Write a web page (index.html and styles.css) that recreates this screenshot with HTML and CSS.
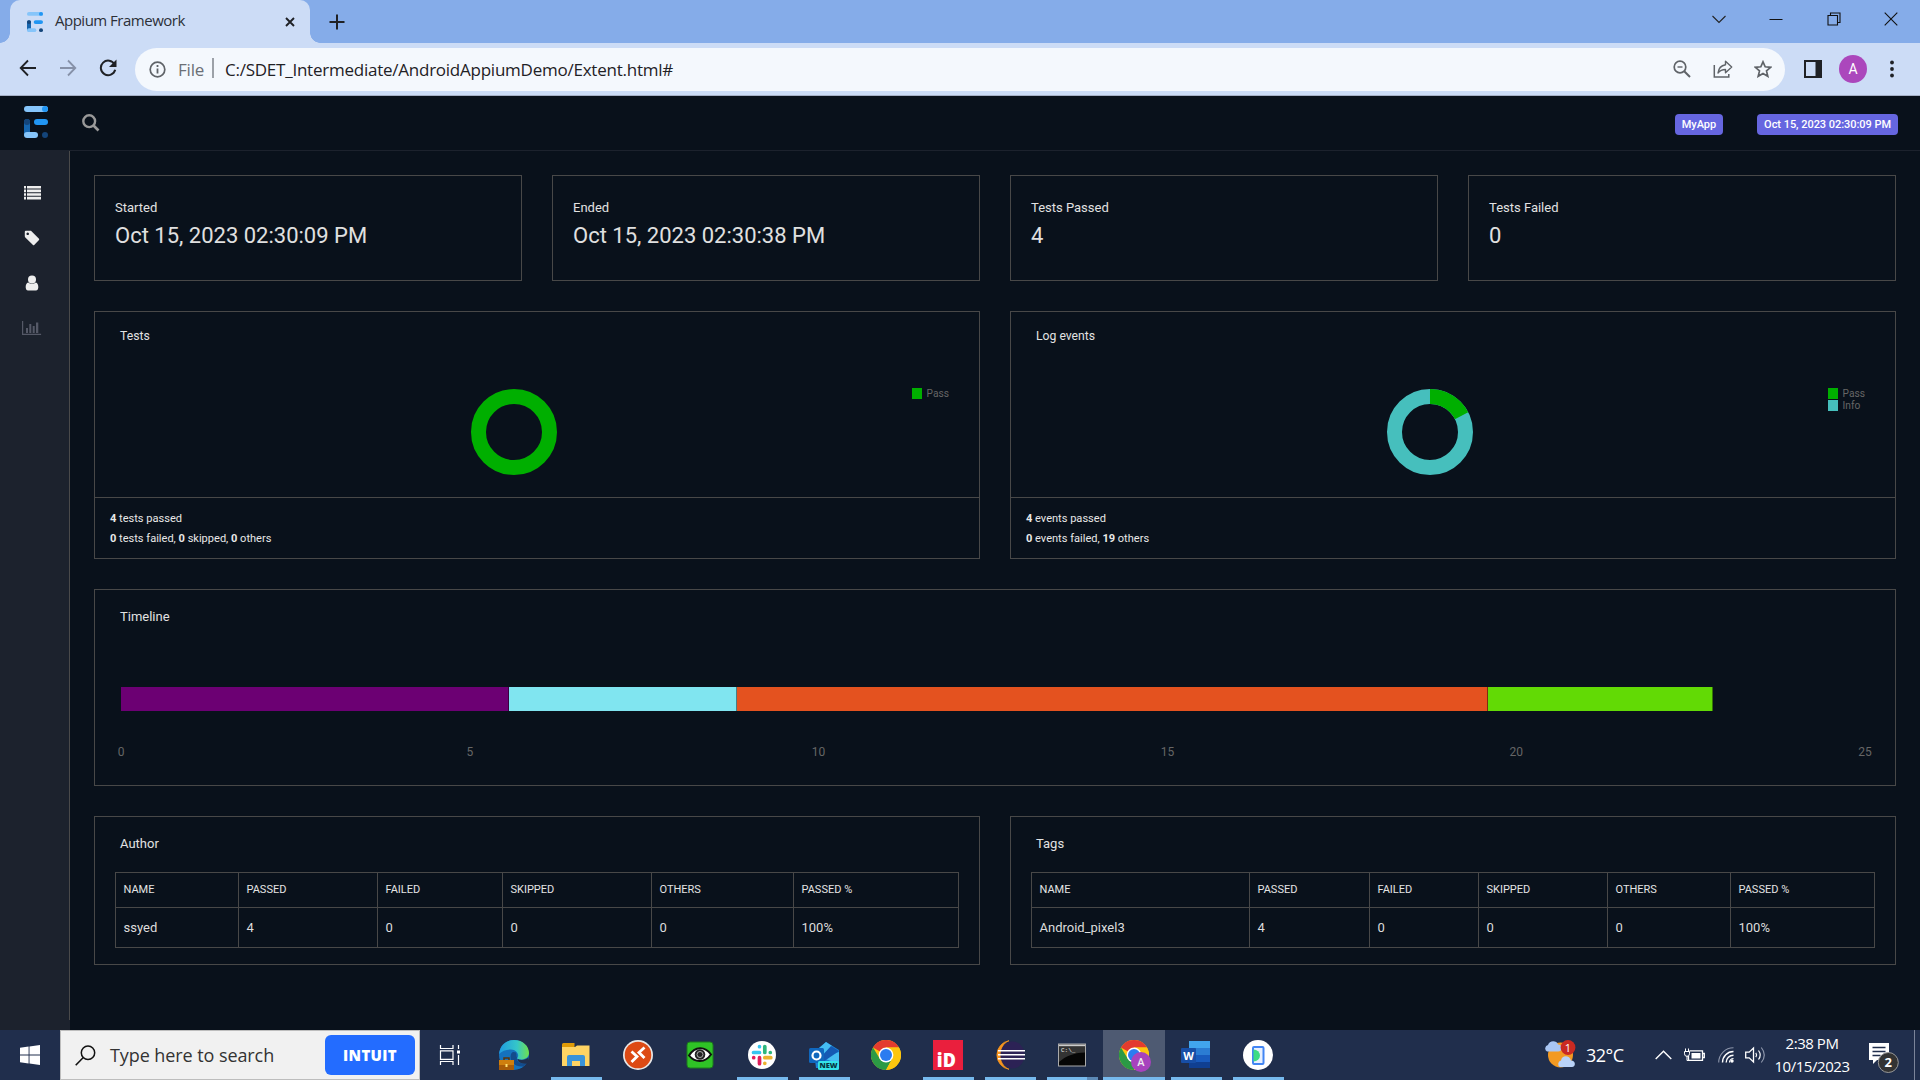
FILE: index.html
```html
<!DOCTYPE html>
<html lang="en">
<head>
<meta charset="utf-8">
<title>Appium Framework</title>
<link rel="stylesheet" href="styles.css">
</head>
<body>
<svg class="defs" width="0" height="0">
  <defs>
    <symbol id="logo" viewBox="0 0 24 32" preserveAspectRatio="none">
      <rect width="24" height="6" rx="3" fill="#86c5fa"/><circle cx="21" cy="3" r="3" fill="#2196f3"/>
      <rect x="10" y="13" width="14" height="6" rx="3" fill="#2196f3"/>
      <rect y="13" width="6" height="18" rx="3" fill="#1565ae"/><circle cx="3" cy="16" r="3" fill="#14457a"/>
      <rect y="26" width="14" height="6" rx="3" fill="#86c5fa"/><circle cx="21" cy="29" r="3" fill="#14457a"/>
    </symbol>
    <symbol id="chrome" viewBox="0 0 30 30">
      <circle cx="15" cy="15" r="15" fill="#fdc60f"/>
      <path d="M15 15 2 7.5A15 15 0 0 1 28 7.5H15z" fill="#e33b2e"/>
      <path d="M2 7.5A15 15 0 0 0 15 30L21.2 18.7 8.8 18.7z" fill="#2b9a45"/>
      <path d="M28 7.5H15L21.2 18.7 15 30A15 15 0 0 0 28 7.5z" fill="#fdc60f"/>
      <circle cx="15" cy="15" r="7.4" fill="#fff"/><circle cx="15" cy="15" r="6" fill="#2b7cf0"/>
    </symbol>
  </defs>
</svg>

<div class="tabstrip">
  <div class="tab">
    <svg class="favicon" width="16" height="20"><use href="#logo"/></svg>
    <span class="tab-title">Appium Framework</span>
    <svg class="tab-close" width="10" height="10" viewBox="0 0 10 10"><path d="M1 1l8 8M9 1l-8 8" stroke="#1f2125" stroke-width="1.9"/></svg>
  </div>
  <svg class="newtab" width="16" height="16" viewBox="0 0 16 16"><path d="M8 .5v15M.5 8h15" stroke="#1f2125" stroke-width="2"/></svg>
  <div class="winbtns">
    <svg width="14" height="14" viewBox="0 0 14 14"><path d="M.5 4 7 10.500 13.500 4" fill="none" stroke="#222" stroke-width="1.1"/></svg>
    <svg width="14" height="14" viewBox="0 0 14 14"><path d="M.5 7.500h13" stroke="#111"/></svg>
    <svg width="14" height="14" viewBox="0 0 14 14"><path d="M1 3.500h9.500v9.500H1zM3.500 3.500V1h9.500v9.500h-2.500" fill="none" stroke="#111" stroke-width="1.1"/></svg>
    <svg width="14" height="14" viewBox="0 0 14 14"><path d="M.7.700l12.600 12.600M13.300.700.700 13.300" stroke="#111" stroke-width="1.100"/></svg>
  </div>
</div>

<div class="toolbar">
  <svg width="18" height="18" viewBox="0 0 18 18" class="nav"><path d="M17 9H2M9 1.500 1.700 9 9 16.500" fill="none" stroke="#1f2125" stroke-width="1.800"/></svg>
  <svg width="18" height="18" viewBox="0 0 18 18" class="nav"><path d="M1 9h15M9 1.500 16.300 9 9 16.500" fill="none" stroke="#8691a8" stroke-width="1.800"/></svg>
  <svg width="18" height="18" viewBox="0 0 18 18" class="nav"><path d="M15.600 5.500A7.300 7.300 0 1 0 16.200 10.800" fill="none" stroke="#1f2125" stroke-width="2"/><path d="M17.500.500v7.500H10z" fill="#1f2125"/></svg>
  <div class="omnibox">
    <svg width="17" height="17" viewBox="0 0 17 17"><circle cx="8.500" cy="8.500" r="7.300" fill="none" stroke="#5f6368" stroke-width="1.700"/><path d="M8.500 7.500v5M8.500 4v2" stroke="#5f6368" stroke-width="1.800"/></svg>
    <span class="scheme">File</span>
    <span class="sep"></span>
    <span class="url">C:/SDET_Intermediate/AndroidAppiumDemo/Extent.html#</span>
    <div class="omni-actions">
      <svg width="18" height="18" viewBox="0 0 18 18"><circle cx="7" cy="7" r="5.800" fill="none" stroke="#5f6368" stroke-width="1.700"/><path d="M11.200 11.200l5.800 5.800" stroke="#5f6368" stroke-width="2"/><path d="M4.500 7h5" stroke="#5f6368" stroke-width="1.400"/></svg>
      <svg width="20" height="18" viewBox="0 0 20 18"><path d="M1.300 5v12h14.500v-3" fill="none" stroke="#5f6368" stroke-width="1.500"/><path d="M12.500 1.300 18.700 7l-6.200 5.700V9.500C9 9.500 7 10.500 5 13c.500-4.500 3-7.500 7.500-8.300z" fill="none" stroke="#5f6368" stroke-width="1.400" stroke-linejoin="round"/></svg>
      <svg width="18" height="18" viewBox="0 0 18 18"><path d="M9 1.800 11.200 6.800 16.700 7.300 12.500 10.900 13.800 16.300 9 13.400 4.200 16.300 5.500 10.900 1.300 7.300 6.800 6.800z" fill="none" stroke="#5f6368" stroke-width="1.700"/></svg>
    </div>
  </div>
  <svg class="panel-ico" width="18" height="18" viewBox="0 0 18 18"><path d="M0 0h18v18H0zM2 2v14h9.500V2z" fill="#1f2125" fill-rule="evenodd"/></svg>
  <div class="avatar">A</div>
  <svg class="kebab" width="4" height="18" viewBox="0 0 4 18"><g fill="#1f2125"><circle cx="2" cy="2.500" r="1.900"/><circle cx="2" cy="9" r="1.900"/><circle cx="2" cy="15.500" r="1.900"/></g></svg>
</div>

<div class="app">
  <header class="header">
    <svg class="brand" width="24" height="32"><use href="#logo"/></svg>
    <svg width="18" height="18" viewBox="0 0 18 18" class="search"><circle cx="7.200" cy="7.200" r="5.900" fill="none" stroke="#999" stroke-width="2.400"/><path d="M11.500 11.500l5 5" stroke="#999" stroke-width="2.600"/></svg>
    <span class="badge">MyApp</span>
    <span class="badge">Oct 15, 2023 02:30:09 PM</span>
  </header>
  <div class="body">
    <nav class="side">
      <div class="rail">
        <svg width="18" height="14" viewBox="0 0 18 14"><path d="M1 0h2v2.600H1zM1 3.600h2v2.600H1zM1 7.200h2v2.600H1zM1 10.800h2v2.600H1zM4 0h14v2.600H4zM4 3.600h14v2.600H4zM4 7.200h14v2.600H4zM4 10.800h14v2.600H4z" fill="#eee"/></svg>
        <svg width="16" height="16" viewBox="0 0 16 16"><path d="M.800 1.700A1 1 0 0 1 1.700.800H7L15 8.800a1 1 0 0 1 0 1.200L10.200 14.900a1 1 0 0 1-1.200 0L1.300 7.500.800 6.500zM3.700 2.500a1.300 1.300 0 1 0 .01 0z" fill="#eee" fill-rule="evenodd"/></svg>
        <svg width="14" height="16" viewBox="0 0 14 16"><circle cx="7" cy="4.500" r="4" fill="#eee"/><path d="M3.200 7.500C1.500 8 .500 9.800.700 12.500 1 14.500 1.500 15.500 3 15.500h8c1.500 0 2-1 2.300-3 .200-2.700-.800-4.500-2.500-5-2 1.800-5.600 1.800-7.600 0z" fill="#eee"/></svg>
        <svg width="20" height="14" viewBox="0 0 20 14"><path d="M.600 0v13.300h18.500" fill="none" stroke="#555967" stroke-width="1.200"/><path d="M4 7h2v5H4zM7.300 3h2v9h-2zM10.700 5h2v7h-2zM14 1.500h2.300V12H14z" fill="#555967"/></svg>
      </div>
    </nav>
    <main class="main">
      <div class="row four">
        <section class="card stat"><div class="lbl">Started</div><div class="val">Oct 15, 2023 02:30:09 PM</div></section>
        <section class="card stat"><div class="lbl">Ended</div><div class="val">Oct 15, 2023 02:30:38 PM</div></section>
        <section class="card stat"><div class="lbl">Tests Passed</div><div class="val">4</div></section>
        <section class="card stat"><div class="lbl">Tests Failed</div><div class="val">0</div></section>
      </div>
      <div class="row two">
        <section class="card chart">
          <div class="plot">
            <h6>Tests</h6>
            <svg class="ring" width="88" height="88" viewBox="-44 -44 88 88"><circle r="35.500" fill="none" stroke="#00af00" stroke-width="15"/></svg>
            <div class="legend"><div><i class="pass"></i>Pass</div></div>
          </div>
          <div class="foot"><div><b>4</b> tests passed</div><div><b>0</b> tests failed, <b>0</b> skipped, <b>0</b> others</div></div>
        </section>
        <section class="card chart">
          <div class="plot">
            <h6>Log events</h6>
            <svg class="ring" width="88" height="88" viewBox="-44 -44 88 88"><circle r="35.500" fill="none" stroke="#46bfbd" stroke-width="15"/><circle r="35.500" fill="none" stroke="#00af00" stroke-width="15" pathLength="23" stroke-dasharray="4 19" transform="rotate(-90)"/></svg>
            <div class="legend"><div><i class="pass"></i>Pass</div><div><i class="info"></i>Info</div></div>
          </div>
          <div class="foot"><div><b>4</b> events passed</div><div><b>0</b> events failed, <b>19</b> others</div></div>
        </section>
      </div>
      <section class="card timeline">
        <h6>Timeline</h6>
        <div class="bars">
          <span class="b1" style="width:388px"></span><span class="b2" style="width:228px"></span><span class="b3" style="width:751px"></span><span class="b4" style="width:225px"></span>
        </div>
        <div class="axis"><span>0</span><span>5</span><span>10</span><span>15</span><span>20</span><span>25</span></div>
      </section>
      <div class="row two">
        <section class="card tbl">
          <h6>Author</h6>
          <div class="grid author">
            <span>NAME</span><span>PASSED</span><span>FAILED</span><span>SKIPPED</span><span>OTHERS</span><span>PASSED %</span>
            <span>ssyed</span><span>4</span><span>0</span><span>0</span><span>0</span><span>100%</span>
          </div>
        </section>
        <section class="card tbl">
          <h6>Tags</h6>
          <div class="grid tags">
            <span>NAME</span><span>PASSED</span><span>FAILED</span><span>SKIPPED</span><span>OTHERS</span><span>PASSED %</span>
            <span>Android_pixel3</span><span>4</span><span>0</span><span>0</span><span>0</span><span>100%</span>
          </div>
        </section>
      </div>
    </main>
  </div>
</div>

<div class="taskbar">
  <div class="start"><svg width="20" height="20" viewBox="0 0 20 20"><path d="M0 2.800 8.600 1.600V9.600H0zM9.500 1.500 20 0V9.600H9.500zM0 10.500H8.600V18.500L0 17.300zM9.500 10.500H20V20L9.500 18.600z" fill="#fff"/></svg></div>
  <div class="find">
    <svg width="21" height="21" viewBox="0 0 21 21"><circle cx="13" cy="7.800" r="6.700" fill="none" stroke="#111" stroke-width="1.500"/><path d="M8.300 12.500.700 20.200" stroke="#111" stroke-width="1.600"/></svg>
    <span class="find-text">Type here to search</span>
    <span class="intuit">INTUIT</span>
  </div>
  <div class="tview"><svg width="22" height="20" viewBox="0 0 22 20"><path d="M1.500 0v3.500h12.500V0M1.500 20v-3.500h12.500V20M1.500 5.800h12.500v8.500H1.500zM19.500 0v4M19.500 10v10" fill="none" stroke="#fff" stroke-width="1.200"/><path d="M18 5.500h3v3h-3z" fill="#fff"/></svg></div>
  <div class="apps">
    <div class="ap"><svg width="30" height="30" viewBox="0 0 30 30"><defs><linearGradient id="eg" x1="0" x2="1"><stop offset="0" stop-color="#1f9be0"/><stop offset=".6" stop-color="#35c6c9"/><stop offset="1" stop-color="#6fe04d"/></linearGradient></defs><circle cx="15" cy="15" r="15" fill="#1572bd"/><path d="M0 14C1 5 7 0 15 0c9 0 15 6 15 13 0 6-8 8-12 5.500 3-3 0-9-6-9C7 9.500 3 11 0 14z" fill="url(#eg)"/><path d="M12 14c-2 7 3 13 12 12.500l4-3c-8 1-11-3-10-6-1-1 0-3-1-5-2-1-4-1-5 1.500z" fill="#134b8c"/><path d="M18.500 18.700c3 2 8 1.500 11-1.500v4l-2 2.500c-6 0-9-2-9-5z" fill="#202e4c"/><rect y="20" width="15" height="10" fill="#cf7f0e"/><rect y="25" width="15" height="5" fill="#a95c08"/><path d="M5 20v-2h5v2" fill="none" stroke="#5c3408" stroke-width="1.500"/><rect x="6.500" y="24" width="2" height="3" fill="#ffe070"/></svg></div>
    <div class="ap on"><svg width="30" height="30" viewBox="0 0 30 30"><path d="M1 4.500a1.500 1.500 0 0 1 1.500-1.500h11v5H1z" fill="#e09b07"/><path d="M1 7h13l2-1.500h12.500V26H1z" fill="#ffd463"/><path d="M6 26V17a2 2 0 0 1 2-2h14a2 2 0 0 1 2 2v9h-5v-5h-8v5z" fill="#3a93d8"/></svg></div>
    <div class="ap"><svg width="30" height="30" viewBox="0 0 30 30"><circle cx="15" cy="15" r="15" fill="#e8e8e8"/><circle cx="15" cy="15" r="13.300" fill="#dd4a14"/><path d="M8.500 11.500 14 16.500 8.500 22M21.500 7.500 16 12.500 21.500 18" fill="none" stroke="#fff" stroke-width="2.800"/></svg></div>
    <div class="ap"><svg width="30" height="30" viewBox="0 0 30 30"><rect x="2" y="2" width="26" height="26" rx="3" fill="#2fc326" stroke="#1c7c1c"/><path d="M4 15.500C10 6 20 6 26 14.500 20 23 10 23 4 15.500z" fill="#fff" stroke="#111" stroke-width="2"/><circle cx="15" cy="14.500" r="5.300" fill="#222"/><circle cx="15" cy="14.500" r="3" fill="none" stroke="#aaa"/></svg></div>
    <div class="ap on"><svg width="30" height="30" viewBox="0 0 30 30"><circle cx="15" cy="15" r="14" fill="#fff"/><g stroke-width="3.700" stroke-linecap="round"><path d="M12.500 6.700v.01M6.500 12.500h6" stroke="#36c5f0"/><path d="M17.800 6.500v6M23.300 12.500v.01" stroke="#2eb67d"/><path d="M17.800 17.700h6M17.800 23.300v.01" stroke="#ecb22e"/><path d="M12.500 17.700v6M6.700 17.700v.01" stroke="#e01e5a"/></g></svg></div>
    <div class="ap on"><svg width="30" height="30" viewBox="0 0 30 30"><path d="M5 12 17 2l13 8v16a2 2 0 0 1-2 2H7z" fill="#1a83d8"/><path d="M8 10 17 2l6 4L12 16zM30 12v12L14 18z" fill="#45bdf2"/><path d="M22 6l8 5-16 11V15z" fill="#1559b3"/><rect y="8" width="15" height="15" rx="1.500" fill="#1067bd"/><circle cx="7.500" cy="15.500" r="4" fill="none" stroke="#fff" stroke-width="2.200"/><rect x="9" y="21" width="21" height="9" rx="1.500" fill="#35e3e8"/><text x="19.500" y="28.300" text-anchor="middle" font-family="Open Sans, sans-serif" font-weight="800" font-size="7.500" fill="#073642">NEW</text></svg></div>
    <div class="ap"><svg width="30" height="30"><use href="#chrome"/></svg></div>
    <div class="ap on"><svg class="id-ico" width="30" height="30" viewBox="0 0 30 30"><rect width="30" height="30" fill="#ea1f3d"/><text x="13.300" y="26.500" text-anchor="middle" textLength="19" lengthAdjust="spacingAndGlyphs" font-family="Open Sans, sans-serif" font-weight="800" font-size="19" fill="#fff">iD</text></svg></div>
    <div class="ap on"><svg width="30" height="30" viewBox="0 0 30 30"><path d="M14 .700A14.500 14.500 0 0 0 14 29.300C2.500 25 2.500 5 14 .700z" fill="#f7941e" stroke="#f7941e" stroke-width=".8"/><ellipse cx="17.500" cy="15" rx="12" ry="13.500" fill="#2c2255"/><path d="M3 10.800h27M3 14.800h27M3 18.800h27" stroke="#fff" stroke-width="1.500"/></svg></div>
    <div class="ap on split"><svg width="30" height="30" viewBox="0 0 30 30"><rect x="1.500" y="4" width="27" height="22" fill="#060606" stroke="#aaa"/><path d="M2 4.500h26v2H2z" fill="#ccc"/><path d="M2 6.500h26v6C16 13 9 16 2 22z" fill="#333"/><text x="4" y="12" font-family="Liberation Mono, monospace" font-size="6" fill="#eee">C:\_</text></svg></div>
    <div class="ap on active"><svg width="34" height="34" viewBox="0 0 34 34"><use href="#chrome" x="2" y="2" width="30" height="30"/><circle cx="24" cy="24" r="10" fill="#a743bd"/><text x="24" y="28" text-anchor="middle" font-family="Roboto, sans-serif" font-weight="500" font-size="11" fill="#eee">A</text></svg></div>
    <div class="ap on"><svg width="30" height="30" viewBox="0 0 30 30"><path d="M8 1h21v7H8z" fill="#41a5ee"/><path d="M8 8h21v7H8z" fill="#2b7cd3"/><path d="M8 15h21v7H8z" fill="#185abd"/><path d="M8 22h21v6H8z" fill="#103f91"/><rect x="0" y="8" width="15" height="15" rx="1" fill="#174ea6"/><text x="7.500" y="19.500" text-anchor="middle" font-family="Open Sans, sans-serif" font-weight="700" font-size="11" fill="#fff">W</text></svg></div>
    <div class="ap on"><svg width="30" height="30" viewBox="0 0 30 30"><circle cx="15" cy="15" r="15" fill="#fff"/><rect x="10" y="7" width="10.500" height="17" rx="1" fill="#e8f0fe" stroke="#4285f4" stroke-width="2"/><path d="M10.500 9.500a6.500 6 0 0 1 0 12z" fill="#3ddc84"/></svg></div>
  </div>
  <div class="tray">
    <svg width="31" height="30" viewBox="0 0 31 30"><circle cx="15.500" cy="15" r="12.500" fill="#f39a22"/><path d="M2 11.500a3.500 3.500 0 0 1 1-6.500C4 0 12 0 13 4.500c5 0 5 7 0 7z" fill="#a9c6f3"/><path d="M15 27a3.500 3.500 0 0 1 1-6.500c1-6 9-5 10 0 5 0 5 6.500 1 6.500z" fill="#b9d2f7"/><circle cx="23" cy="7.500" r="7.400" fill="#c92a22"/><text x="23" y="11.500" text-anchor="middle" font-family="Open Sans, sans-serif" font-size="11" fill="#fff">1</text></svg>
    <span class="temp">32°C</span>
    <svg class="chev" width="17" height="10" viewBox="0 0 17 10"><path d="M.700 9 8.500 1.200 16.300 9" fill="none" stroke="#fff" stroke-width="1.400"/></svg>
    <svg class="bat" width="21" height="14" viewBox="0 0 21 14"><path d="M5.500 2.800h13v9.500H4.500V8M19 5.500h1.300v4H19" fill="none" stroke="#fff" stroke-width="1.300"/><path d="M7.500 5h9v5.500h-9z" fill="#fff"/><path d="M.500 3.500h5v2.300a2.500 2.500 0 0 1-5 0zM1.500.500v3M4.500.500v3M3 8v4.500h2" fill="none" stroke="#fff"/></svg>
    <svg class="wifi" width="16" height="16" viewBox="0 0 16 16"><g fill="none"><path d="M.700 15.500A14.800 14.800 0 0 1 15.500 .700" stroke="#8c95aa" stroke-width="1.100"/><path d="M4.500 15.500A11 11 0 0 1 15.500 4.500M8.200 15.500a7.300 7.300 0 0 1 7.300-7.300" stroke="#fff" stroke-width="1.400"/></g><path d="M11.500 15.500a4 4 0 0 1 4-4" fill="none" stroke="#fff" stroke-width="1.200"/><circle cx="14" cy="14" r="1.700" fill="#fff"/></svg>
    <svg class="vol" width="21" height="18" viewBox="0 0 21 18"><path d="M.700 6.200h3.500L8.500 2v14L4.200 11.800H.700z" fill="none" stroke="#fff" stroke-width="1.300"/><path d="M10.800 6.800q1.600 2.200 0 4.400M13.500 4.500q3.400 4.500 0 9" fill="none" stroke="#fff" stroke-width="1.200"/><path d="M16.300 1.500q6 7.500 0 15" fill="none" stroke="#8c95aa" stroke-width="1.200"/></svg>
    <div class="clock"><span>2:38 PM</span><span>10/15/2023</span></div>
    <svg class="note" width="32" height="32" viewBox="0 0 32 32"><path d="M1 1h20v17H9l-4 4v-4H1z" fill="#fff"/><path d="M4.500 5.500h13M4.500 9.500h13M4.500 13.500h8" stroke="#202e4c" stroke-width="1.300"/><circle cx="20.300" cy="20.500" r="10" fill="#333" stroke="#999"/><text x="20.300" y="25" text-anchor="middle" font-family="Open Sans, sans-serif" font-weight="700" font-size="13" fill="#fff">2</text></svg>
  </div>
</div>
</body>
</html>
```
FILE: styles.css
```css
* { box-sizing: border-box; }
body {
  margin: 0; width: 1920px; height: 1080px; overflow: hidden;
  display: flex; flex-direction: column;
  background: #09111b; color: #ddd;
  font-family: Roboto, sans-serif; font-size: 13px;
}
svg { display: block; flex: none; }
.defs { position: absolute; }

/* browser frame */
.tabstrip { height: 43px; flex: none; display: flex; align-items: center; background: #85ace9; padding-left: 10px; font-family: "Open Sans", sans-serif; }
.tab { width: 300px; height: 43px; display: flex; align-items: center; background: #ccdcf6; border-radius: 10px 10px 0 0; padding: 0 15px 0 17px; position: relative; }
.tab::before, .tab::after { content: ""; position: absolute; bottom: 0; width: 10px; height: 10px; }
.tab::before { left: -10px; background: radial-gradient(circle at 0 0, transparent 9.5px, #ccdcf6 10px); }
.tab::after { right: -10px; background: radial-gradient(circle at 100% 0, transparent 9.5px, #ccdcf6 10px); }
.tab-title { margin-left: 12px; font-size: 15px; letter-spacing: -0.5px; color: #2c3038; flex: 1; white-space: nowrap; padding-bottom: 3px; }
.newtab { margin-left: 19px; }
.winbtns { margin-left: auto; margin-right: 22px; display: flex; gap: 43.300px; padding-bottom: 6px; }

.toolbar { height: 53px; flex: none; display: flex; align-items: center; background: #ccdcf6; border-bottom: 1px solid #a5b0c6; padding-left: 19px; }
.nav { margin-right: 22px; position: relative; top: -1px; }
.omnibox { flex: none; margin-left: -4px; width: 1650px; height: 43px; border-radius: 22px; background: #f4f8fd; display: flex; align-items: center; padding: 0 13px 0 14px; font-family: "Open Sans", sans-serif; }
.scheme { margin-left: 12px; color: #6b6f76; letter-spacing: -0.2px; width: 27px; font-size: 17px; }
.sep { width: 2px; height: 20px; background: #9ca1a8; margin: 0 11px 2px 7px; }
.url { color: #1f2125; font-size: 17px; letter-spacing: -0.24px; }
.omni-actions { margin-left: auto; display: flex; gap: 21.500px; align-items: center; }
.panel-ico { margin-left: 19px; }
.avatar { width: 28px; height: 28px; border-radius: 50%; background: #ab47bc; color: #fff; display: grid; place-items: center; margin-left: 17px; font-size: 14px; }
.kebab { margin-left: 23px; }

/* report */
.app { flex: 1; display: flex; flex-direction: column; min-height: 0; }
.header { height: 55px; flex: none; border-bottom: 1px solid #1c222d; display: flex; align-items: center; padding: 0 22px 0 24px; }
.brand { margin-bottom: 2px; }
.search { margin-left: 34px; margin-right: auto; }
.badge { background: #6666e0; color: #fff; border-radius: 4px; height: 21px; line-height: 21px; font-size: 11px; font-weight: 500; padding: 0 7px; margin: 2px 0 0 34px; white-space: nowrap; letter-spacing: -0.04px; }
.body { flex: 1; display: flex; min-height: 0; }
.side { width: 70px; flex: none; background: #1c222d; }
.rail { height: 869px; border-right: 1px solid #4a4a4a; display: flex; flex-direction: column; align-items: center; padding: 35px 5px 0 0; gap: 29.500px; }

.main { flex: 1; padding: 24px 24px 0; display: flex; flex-direction: column; gap: 30px; }
.row { display: grid; gap: 30px; }
.four { grid-template-columns: repeat(4, 1fr); }
.two { grid-template-columns: repeat(2, 1fr); }
.card { border: 1px solid #484848; }
h6 { margin: 0; font-weight: 400; font-size: 13px; line-height: 16px; color: #e2e2e2; }
.stat { height: 106px; padding: 23px 20px; }
.lbl { font-size: 13px; line-height: 18px; color: #e2e2e2; }
.val { font-size: 22px; line-height: 30px; margin-top: 4px; color: #e0e0e0; white-space: nowrap; }

.chart { height: 248px; display: flex; flex-direction: column; }
.plot { height: 185px; flex: none; display: grid; grid-template-columns: 373.500px 1fr auto; padding: 16px 30px 0 25px; }
.plot h6 { font-size: 12.200px; }
.ring { margin: 60px 0 0 -24px; }
.legend { margin-top: 59px; font-size: 10.200px; color: #666; }
.legend div { display: flex; align-items: center; height: 12px; }
.legend i { width: 10px; height: 11px; margin-right: 5px; }
.pass { background: #00af00; }
.info { background: #46bfbd; }
.foot { flex: 1; border-top: 1px solid #484848; padding: 11px 15px 0; font-size: 11.050px; line-height: 20px; color: #e8e8e8; }
.foot b { font-weight: 700; }

.timeline { height: 197px; padding: 19px 26px 0; }
.timeline h6 { margin: 0 0 62px -1px; }
.bars { display: flex; height: 24px; }
.bars span { border-right: 1px solid rgba(0, 0, 0, .45); }
.b1 { background: #6c0073; }
.b2 { background: #80e5f0; }
.b3 { background: #e4521f; }
.b4 { background: #62da05; }
.axis { display: flex; justify-content: space-between; margin: 33px -6px 0 -10px; font-size: 12px; line-height: 16px; color: #666; }
.axis span { width: 20px; text-align: center; }

.tbl { height: 149px; padding: 19px 20px 0; }
.tbl h6 { padding-left: 5px; }
.grid { margin-top: 20px; display: grid; grid-template-rows: 35px 40px; border: solid #484848; border-width: 1px 0 0 1px; height: 76px; }
.author { grid-template-columns: 123px 139px 125px 149px 142px 165px; }
.tags { grid-template-columns: 218px 120px 109px 129px 123px 144px; }
.grid span { border-right: 1px solid #484848; border-bottom: 1px solid #484848; padding-left: 7.500px; display: flex; align-items: center; }
.grid span:nth-child(-n+6) { font-size: 11px; padding-bottom: 2px; color: #e4e4e4; }

/* taskbar */
.taskbar { height: 50px; flex: none; display: flex; background: #202e4c; color: #fff; font-family: "Open Sans", sans-serif; }
.start { width: 60px; display: grid; place-items: center; }
.find { width: 360px; background: #f1f1f1; border: 1px solid #bdbdbd; display: flex; align-items: center; padding: 0 4px 0 14px; color: #333; }
.find-text { margin-left: 14px; font-size: 18px; letter-spacing: -0.08px; flex: 1; white-space: nowrap; }
.intuit { width: 90px; height: 40px; border-radius: 6px; background: #236cff; display: grid; place-items: center; color: #fff; font-size: 15px; font-weight: 800; letter-spacing: 0.3px; }
.tview { width: 63px; display: flex; align-items: center; padding-left: 19px; }
.apps { display: flex; }
.ap { width: 62px; display: grid; place-items: center; position: relative; }
.id-ico { overflow: visible; }
.ap.on::after { content: ""; position: absolute; left: 6px; bottom: 0; width: 51px; height: 3px; background: #76b9ed; }
.ap.split::after { background: linear-gradient(90deg, #76b9ed 40px, #5b88b5 40px); }
.ap.active { background: #4e5a72; }
.ap.active::after { left: 0; width: 62px; }
.tray { margin-left: auto; display: flex; align-items: center; padding-right: 5px; border-right: 1px solid #7b8499; margin-right: 5px; }
.temp { font-size: 18px; letter-spacing: -0.5px; margin-left: 10px; width: 39px; white-space: nowrap; }
.chev { margin-left: 30px; }
.bat { margin-left: 12px; }
.wifi { margin-left: 13px; }
.vol { margin-left: 11px; }
.clock { width: 76px; margin-left: 8px; font-size: 15px; letter-spacing: -0.45px; line-height: 23px; display: flex; flex-direction: column; align-items: center; white-space: nowrap; }
.note { margin-left: 18px; margin-right: 9px; margin-top: 6px; }
```
